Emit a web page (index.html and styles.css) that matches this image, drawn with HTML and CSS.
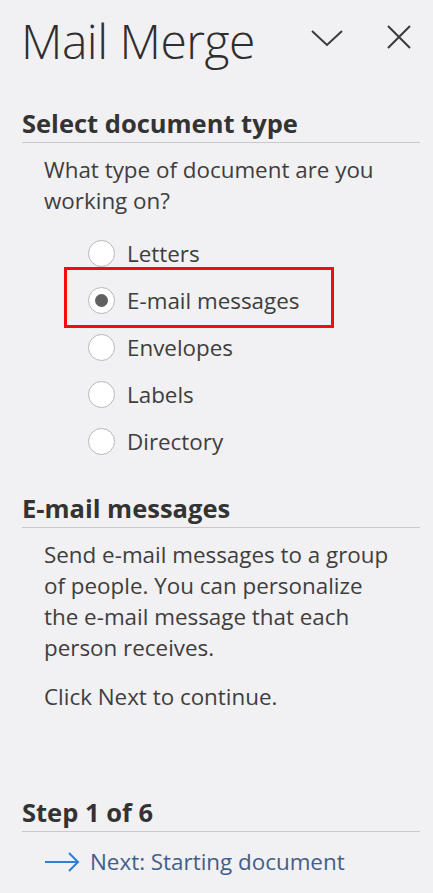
FILE: index.html
```html
<!DOCTYPE html>
<html>
<head>
<meta charset="utf-8">
<link rel="stylesheet" href="styles.css">
</head>
<body>
<div class="pane">
  <header class="title-bar">
    <h1 class="title">Mail Merge</h1>
    <div class="title-icons">
      <svg class="icon-chevron" width="34" height="20" viewBox="0 0 34 20"><path d="M2 3 L17 17 L32 3" fill="none" stroke="#3a3a3a" stroke-width="2"/></svg>
      <svg class="icon-close" width="26" height="24" viewBox="0 0 26 24"><path d="M2 1 L24 23 M24 1 L2 23" fill="none" stroke="#3a3a3a" stroke-width="2"/></svg>
    </div>
  </header>

  <section class="section">
    <h2 class="section-head">Select document type</h2>
    <p class="body-text first">What type of document are you working on?</p>
    <ul class="radio-list">
      <li class="radio-item"><span class="radio"></span>Letters</li>
      <li class="radio-item selected"><span class="radio checked"></span>E-mail messages</li>
      <li class="radio-item"><span class="radio"></span>Envelopes</li>
      <li class="radio-item"><span class="radio"></span>Labels</li>
      <li class="radio-item"><span class="radio"></span>Directory</li>
    </ul>
  </section>

  <section class="section section-email">
    <h2 class="section-head">E-mail messages</h2>
    <p class="body-text first">Send e-mail messages to a group of people. You can personalize the e-mail message that each person receives.</p>
    <p class="body-text next-hint">Click Next to continue.</p>
  </section>

  <section class="section section-step">
    <h2 class="section-head">Step 1 of 6</h2>
    <a class="next-link">
      <svg width="36" height="20" viewBox="0 0 36 20"><path d="M1 10 H34 M25 1 L34 10 L25 19" fill="none" stroke="#2f7fd4" stroke-width="2"/></svg>
      <span>Next: Starting document</span>
    </a>
  </section>
</div>
</body>
</html>
```
FILE: styles.css
```css
html, body {
  margin: 0;
  padding: 0;
  background: #f1f0f2;
}
body {
  font-family: "Open Sans", "Noto Sans", sans-serif;
  color: #3b3b3b;
  width: 433px;
  height: 893px;
  overflow: hidden;
}
.pane {
  padding: 0 13px 0 22px;
}
.title-bar {
  display: flex;
  align-items: flex-start;
  justify-content: space-between;
  height: 107px;
}
.title {
  margin: 6px 0 0 -1px;
  font-weight: 300;
  font-size: 48px;
  line-height: 70px;
  letter-spacing: -0.5px;
  color: #2e2e2e;
}
.title-icons {
  display: flex;
  gap: 42px;
  margin-top: 25px;
  margin-right: 8px;
}
.icon-chevron { margin-top: 3px; }
.section-head {
  margin: 0;
  font-size: 25.5px;
  font-weight: 700;
  line-height: 32px;
  color: #333;
  border-bottom: 1.5px solid #c9c8cb;
  padding-bottom: 3px;
}
.body-text {
  margin: 0;
  padding: 0 20px 0 22px;
  font-size: 22.4px;
  line-height: 31px;
  color: #3e3e3e;
}
.body-text.first {
  margin-top: 11px;
}
.radio-list {
  list-style: none;
  margin: 14px 0 0 0;
  padding: 0 0 0 66px;
}
.radio-item {
  display: flex;
  align-items: center;
  gap: 12px;
  height: 47px;
  font-size: 22.4px;
  color: #3e3e3e;
  position: relative;
}
.radio {
  box-sizing: border-box;
  width: 27px;
  height: 27px;
  border-radius: 50%;
  border: 1.5px solid #b8b8b8;
  background: #fff;
  display: flex;
  align-items: center;
  justify-content: center;
}
.radio.checked::after {
  content: "";
  width: 13px;
  height: 13px;
  border-radius: 50%;
  background: #616161;
}
.selected::before {
  content: "";
  position: absolute;
  left: -24px;
  top: -10px;
  width: 270px;
  height: 61px;
  box-sizing: border-box;
  border: 3px solid #f20c0c;
}
.section-email {
  margin-top: 27px;
}
.next-hint {
  margin-top: 18px;
}
.section-step {
  margin-top: 84px;
}
.next-link {
  display: flex;
  align-items: center;
  gap: 10px;
  margin-top: 14px;
  padding-left: 22px;
  font-size: 22.4px;
  line-height: 31px;
  color: #3f5f8a;
}
```
